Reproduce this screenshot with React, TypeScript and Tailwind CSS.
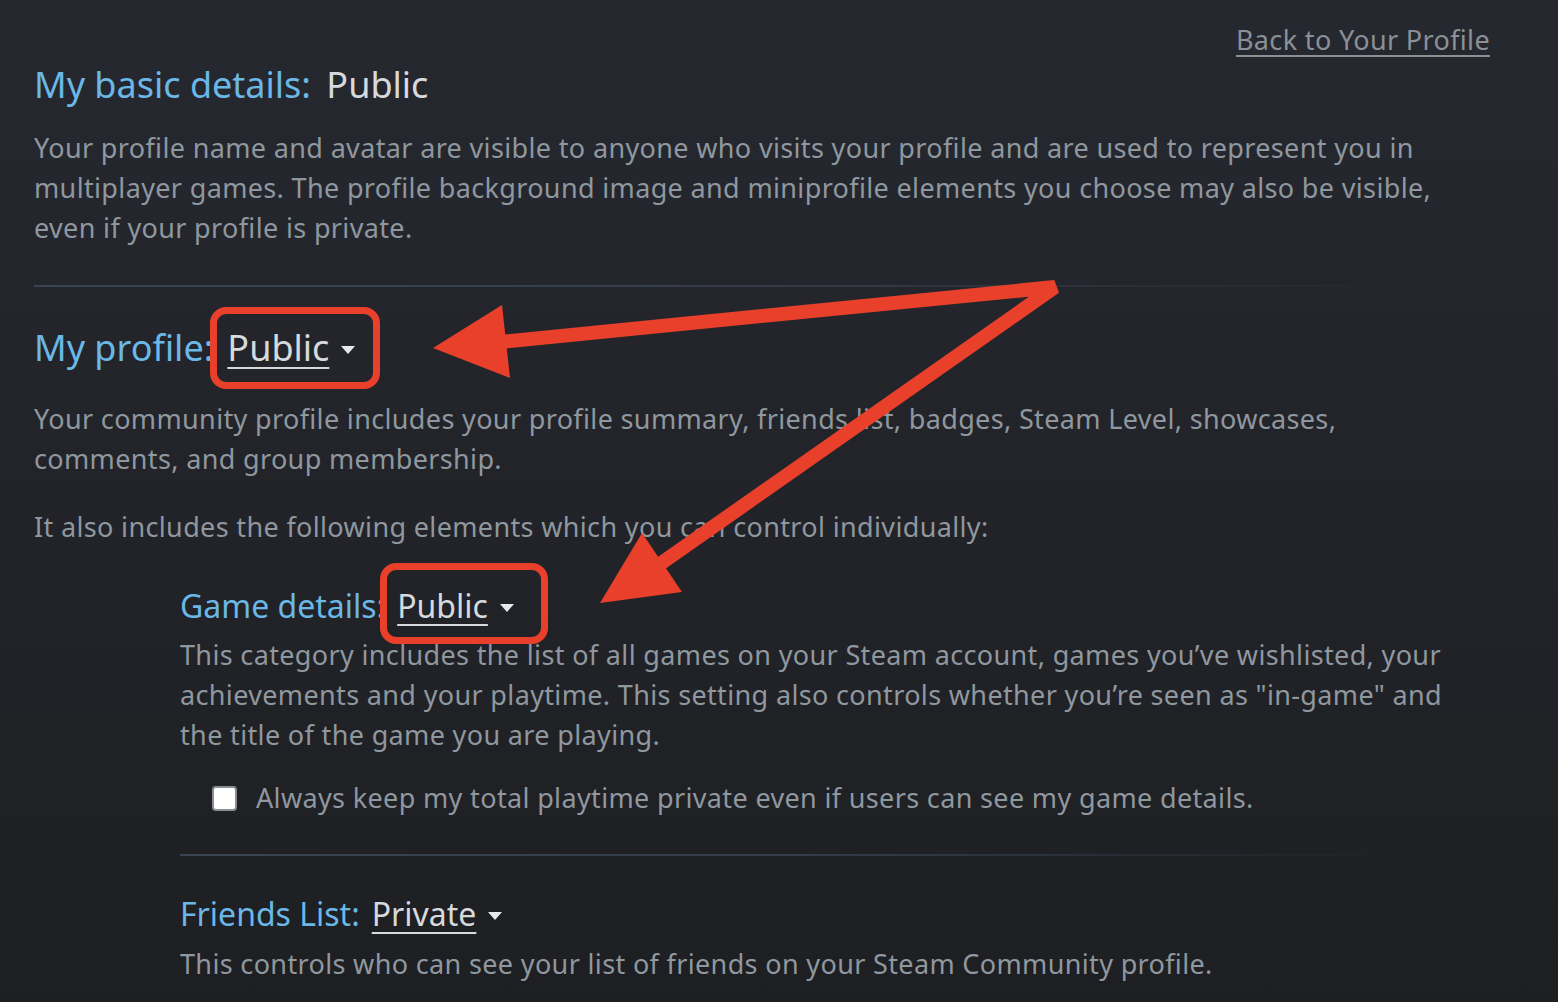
import React from "react";

const font = { fontFamily: '"Noto Sans", "Open Sans", sans-serif' };

function Caret() {
  return (
    <svg width="14" height="8" viewBox="0 0 14 8" className="ml-3 mt-[4px]">
      <path d="M0 0 L14 0 L7 8 Z" fill="#e6e8ea" />
    </svg>
  );
}

function Dropdown({ label, box }: { label: string; box?: string }) {
  return (
    <span className="relative inline-flex items-center">
      <span className="text-[#d6dadd] underline decoration-[2px] underline-offset-[6px]">{label}</span>
      <Caret />
      {box && <span className={"pointer-events-none absolute rounded-[16px] border-[7px] border-[#e8402a] " + box} />}
    </span>
  );
}

function Divider({ className }: { className: string }) {
  return <div className={"h-[2px] bg-gradient-to-r from-[#3a4452] via-[#343d49] to-transparent " + className} />;
}

export default function App() {
  return (
    <div
      className="relative min-h-[1002px] w-[1558px] overflow-hidden bg-gradient-to-b from-[#262830] to-[#1e1f22] text-[27px] leading-[40px] tracking-[0.35px] text-[#8f979f]"
      style={font}
    >
      <div className="flex justify-end pr-[68px] pt-[20px]">
        <a className="text-[#8b9096] underline decoration-[2px] underline-offset-[5px]">Back to Your Profile</a>
      </div>

      <div className="px-[34px]">
        <h2 className="text-[36px] leading-[50px] tracking-normal text-[#6bb7e6]">
          My basic details: <span className="ml-[6px] text-[#d6dadd]">Public</span>
        </h2>
        <p className="mt-[18px] w-[1405px]">
          Your profile name and avatar are visible to anyone who visits your profile and are used to represent you in
          multiplayer games. The profile background image and miniprofile elements you choose may also be visible,
          even if your profile is private.
        </p>

        <Divider className="mt-[37px] w-[1390px]" />

        <h2 className="mt-[36px] flex items-center text-[36px] leading-[50px] tracking-normal text-[#6bb7e6]">
          <span className="mr-[14px]">My profile:</span>
          <Dropdown label="Public" box="-left-[17px] -top-[16px] h-[82px] w-[170px]" />
        </h2>
        <p className="mt-[26px] w-[1405px]">
          Your community profile includes your profile summary, friends list, badges, Steam Level, showcases,
          comments, and group membership.
        </p>
        <p className="mt-[28px]">It also includes the following elements which you can control individually:</p>

        <div className="pl-[146px]">
          <h3 className="mt-[34px] flex items-center text-[32px] leading-[50px] tracking-normal text-[#6bb7e6]">
            <span className="mr-[12px]">Game details:</span>
            <Dropdown label="Public" box="-left-[17px] -top-[18px] h-[81px] w-[168px]" />
          </h3>
          <p className="mt-[4px] w-[1290px]">
            This category includes the list of all games on your Steam account, games you’ve wishlisted, your
            achievements and your playtime. This setting also controls whether you’re seen as "in-game" and the title
            of the game you are playing.
          </p>
          <label className="mt-[23px] flex items-center pl-[32px]">
            <span className="mr-[19px] h-[25px] w-[25px] rounded-[4px] border-2 border-[#8a8f95] bg-white" />
            <span>Always keep my total playtime private even if users can see my game details.</span>
          </label>

          <Divider className="mt-[36px] w-[1220px]" />

          <h3 className="mt-[33px] flex items-center text-[32px] leading-[50px] tracking-normal text-[#6bb7e6]">
            <span className="mr-[12px]">Friends List:</span>
            <Dropdown label="Private" />
          </h3>
          <p className="mt-[5px]">This controls who can see your list of friends on your Steam Community profile.</p>
        </div>
      </div>

      <svg className="pointer-events-none absolute left-0 top-0" width="1558" height="1002">
        <path
          d="M 500 342 L 1055 287 L 660 564"
          fill="none"
          stroke="#e8402a"
          strokeWidth="14"
          strokeLinejoin="bevel"
        />
        <polygon points="433,348 502,305 510,378" fill="#e8402a" />
        <polygon points="600,603 642,533 682,592" fill="#e8402a" />
      </svg>
    </div>
  );
}
